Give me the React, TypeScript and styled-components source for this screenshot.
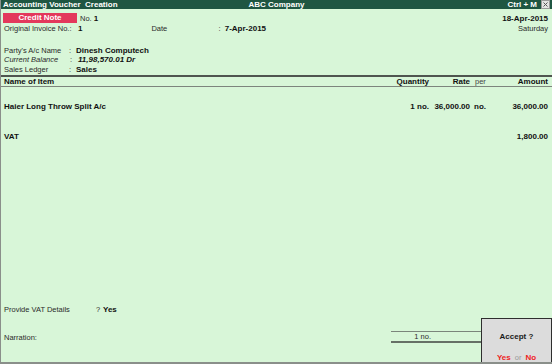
import React from 'react';
import styled, { createGlobalStyle } from 'styled-components';

const GlobalStyle = createGlobalStyle`
  html, body {
    margin: 0;
    padding: 0;
    background: #d8f6d8;
  }
  body {
    font-family: 'Liberation Sans', Arial, sans-serif;
  }
`;

const Screen = styled.div`
  position: relative;
  width: 552px;
  height: 364px;
  box-sizing: border-box;
  display: flex;
  flex-direction: column;
  background: #d8f6d8;
  border-left: 1px solid #8a8f8a;
  border-bottom: 2px solid #8a8f8a;
  color: #262626;
  font-size: 7.5px;
  overflow: hidden;
`;

const TitleBar = styled.div`
  height: 9px;
  display: grid;
  grid-template-columns: 1fr auto 1fr;
  align-items: center;
  padding: 0 2px 0 2px;
  background: #1f5642;
  color: #fff;
  font-weight: 700;
  font-size: 8px;
  line-height: 9px;
`;

const TitleRight = styled.div`
  display: flex;
  justify-content: flex-end;
  align-items: center;
  gap: 4px;
`;

const CloseBox = styled.span`
  display: inline-flex;
  width: 7px;
  height: 7px;
  background: #e4e4e4;
  border: 1px solid #9a9a9a;
  align-items: center;
  justify-content: center;
`;

const Header = styled.div`
  padding: 4px 4px 0 2px;
`;

const Row = styled.div<{ $h?: number; $mt?: number }>`
  display: flex;
  align-items: center;
  height: ${p => p.$h ?? 10}px;
  margin-top: ${p => p.$mt ?? 0}px;
  white-space: nowrap;
`;

const VoucherType = styled.div`
  width: 74px;
  height: 10px;
  line-height: 10px;
  background: #e3385c;
  color: #fff;
  font-weight: 700;
  font-size: 8px;
  text-align: center;
`;

const Label = styled.span<{ $w?: number; $italic?: boolean }>`
  display: inline-block;
  width: ${p => (p.$w ? `${p.$w}px` : 'auto')};
  font-style: ${p => (p.$italic ? 'italic' : 'normal')};
  color: #2a2a2a;
`;

const Value = styled.span<{ $italic?: boolean }>`
  font-weight: 700;
  font-size: 8px;
  color: #111;
  font-style: ${p => (p.$italic ? 'italic' : 'normal')};
`;

const Spacer = styled.div`
  flex: 1;
`;

const RightText = styled.span<{ $bold?: boolean }>`
  font-weight: ${p => (p.$bold ? 700 : 400)};
  font-size: ${p => (p.$bold ? 8 : 7.5)}px;
  color: ${p => (p.$bold ? '#111' : '#2a2a2a')};
`;

const TableHead = styled.div`
  margin-top: 1px;
  border-top: 2px solid #4f554f;
  border-bottom: 1px solid #7d857d;
  height: 9px;
`;

const Cols = styled.div<{ $h?: number }>`
  display: grid;
  grid-template-columns: 1fr 70px 41px 18px 60px;
  align-items: center;
  height: ${p => p.$h ?? 10}px;
  padding: 0 4px 0 2px;
  white-space: nowrap;
`;

const Cell = styled.div<{ $right?: boolean; $bold?: boolean; $pad?: number }>`
  text-align: ${p => (p.$right ? 'right' : 'left')};
  font-weight: ${p => (p.$bold ? 700 : 400)};
  font-size: ${p => (p.$bold ? 8 : 7.5)}px;
  color: ${p => (p.$bold ? '#111' : '#444')};
  padding-left: ${p => p.$pad ?? 0}px;
`;

const Body = styled.div`
  flex: 1;
  display: flex;
  flex-direction: column;
`;

const ItemRow = styled(Cols)<{ $mt: number }>`
  margin-top: ${p => p.$mt}px;
`;

const Footer = styled.div`
  padding: 0 0 19px 2px;
`;

const Question = styled.span`
  display: inline-block;
  width: 7px;
  color: #2a2a2a;
`;

const TotalBox = styled.div`
  margin-left: auto;
  margin-right: 71px;
  width: 90px;
  height: 12px;
  box-sizing: border-box;
  border-top: 1px solid #7b857b;
  border-bottom: 2px solid #667066;
  display: flex;
  align-items: center;
  justify-content: flex-end;
  padding-right: 50px;
  color: #2a2a2a;
`;

const AcceptBox = styled.div`
  position: absolute;
  right: 0;
  bottom: 0;
  width: 71px;
  height: 44px;
  box-sizing: border-box;
  background: #dcdcdc;
  border: 1px solid #2e2e2e;
  border-bottom: none;
  display: flex;
  flex-direction: column;
  align-items: center;
  font-weight: 700;
  font-size: 8px;
`;

const AcceptTitle = styled.div`
  margin-top: 13px;
  color: #1a1a1a;
`;

const AcceptChoices = styled.div`
  margin-top: 12px;
  display: flex;
  gap: 4px;
  align-items: center;
`;

const Choice = styled.span`
  color: #ee1c24;
`;

const Or = styled.span`
  color: #9a9a9a;
  font-weight: 400;
  font-size: 7.5px;
`;

export default function App() {
  return (
    <>
      <GlobalStyle />
      <Screen>
        <TitleBar>
          <span>Accounting Voucher&nbsp; Creation</span>
          <span>ABC Company</span>
          <TitleRight>
            <span>Ctrl + M</span>
            <CloseBox>
              <svg width="5" height="5" viewBox="0 0 5 5">
                <path d="M0.5 0.5 L4.5 4.5 M4.5 0.5 L0.5 4.5" stroke="#555" strokeWidth="1" />
              </svg>
            </CloseBox>
          </TitleRight>
        </TitleBar>

        <Header>
          <Row>
            <VoucherType>Credit Note</VoucherType>
            <Label style={{ marginLeft: 3 }}>No.&nbsp;</Label>
            <Value>1</Value>
            <Spacer />
            <RightText $bold>18-Apr-2015</RightText>
          </Row>
          <Row>
            <Label $w={74} style={{ paddingLeft: 1 }}>Original Invoice No.:</Label>
            <Value>1</Value>
            <Label $w={67} style={{ marginLeft: 69 }}>Date</Label>
            <Label>:&nbsp;&nbsp;</Label>
            <Value>7-Apr-2015</Value>
            <Spacer />
            <RightText>Saturday</RightText>
          </Row>
          <Row $mt={12}>
            <Label $w={65} style={{ paddingLeft: 1 }}>Party's A/c Name</Label>
            <Label $w={7}>:</Label>
            <Value>Dinesh Computech</Value>
          </Row>
          <Row $h={9}>
            <Label $w={66} $italic style={{ paddingLeft: 1 }}>Current Balance</Label>
            <Label $w={8}>:</Label>
            <Value $italic>11,98,570.01 Dr</Value>
          </Row>
          <Row>
            <Label $w={65} style={{ paddingLeft: 1 }}>Sales Ledger</Label>
            <Label $w={7}>:</Label>
            <Value>Sales</Value>
          </Row>
        </Header>

        <TableHead>
          <Cols $h={9}>
            <Cell $bold style={{ paddingLeft: 1 }}>Name of Item</Cell>
            <Cell $right $bold>Quantity</Cell>
            <Cell $right $bold>Rate</Cell>
            <Cell $pad={5}>per</Cell>
            <Cell $right $bold>Amount</Cell>
          </Cols>
        </TableHead>

        <Body>
          <ItemRow $mt={14}>
            <Cell $bold style={{ paddingLeft: 1 }}>Haier Long Throw Split A/c</Cell>
            <Cell $right $bold>1 no.</Cell>
            <Cell $right $bold>36,000.00</Cell>
            <Cell $bold $pad={4}>no.</Cell>
            <Cell $right $bold>36,000.00</Cell>
          </ItemRow>
          <ItemRow $mt={20}>
            <Cell $bold style={{ paddingLeft: 1 }}>VAT</Cell>
            <Cell />
            <Cell />
            <Cell />
            <Cell $right $bold>1,800.00</Cell>
          </ItemRow>
        </Body>

        <Footer>
          <Row>
            <Label $w={92} style={{ paddingLeft: 1 }}>Provide VAT Details</Label>
            <Question>?</Question>
            <Value>Yes</Value>
          </Row>
          <Row $h={12} $mt={17}>
            <Label style={{ paddingLeft: 1 }}>Narration:</Label>
            <TotalBox>1 no.</TotalBox>
          </Row>
        </Footer>

        <AcceptBox>
          <AcceptTitle>Accept ?</AcceptTitle>
          <AcceptChoices>
            <Choice>Yes</Choice>
            <Or>or</Or>
            <Choice>No</Choice>
          </AcceptChoices>
        </AcceptBox>
      </Screen>
    </>
  );
}
